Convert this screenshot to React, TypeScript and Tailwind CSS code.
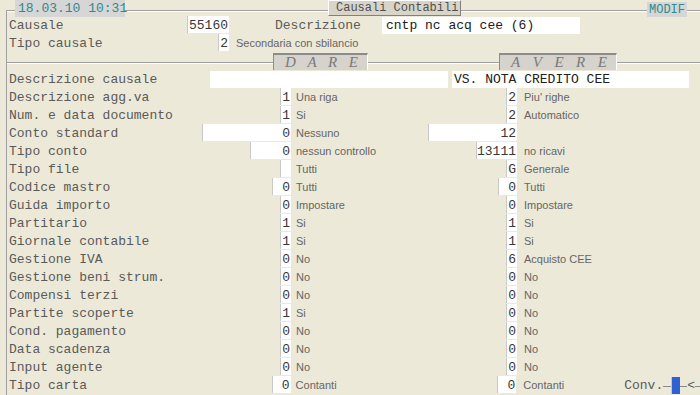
import React from "react";

const mono = { fontFamily: '"Liberation Mono", "Courier New", monospace' };
const sans = { fontFamily: '"Liberation Sans", Arial, sans-serif' };

function Line({ className = "" }: { className?: string }) {
  return <div className={"h-[2px] border-t border-t-[#a0a0a0] border-b border-b-white " + className} />;
}

function Box({ w, children }: { w: string; children?: React.ReactNode }) {
  return (
    <div className={w + " h-[17px] bg-white border-l border-l-[#c8c8c8] text-right pr-px leading-[19px] text-[13px] text-[#383838] whitespace-nowrap"}>
      {children}
    </div>
  );
}

type R = { label: string; d: string; dd: string; a: string; ad: string; dw: string; aw: string };

const S = "w-[11px]";
const rows: R[] = [
  { label: "Descrizione agg.va", d: "1", dd: "Una riga", a: "2", ad: "Piu' righe", dw: S, aw: S },
  { label: "Num. e data documento", d: "1", dd: "Si", a: "2", ad: "Automatico", dw: S, aw: S },
  { label: "Conto standard", d: "0", dd: "Nessuno", a: "12", ad: "", dw: "w-[89px]", aw: "w-[89px]" },
  { label: "Tipo conto", d: "0", dd: "nessun controllo", a: "13111", ad: "no ricavi", dw: "w-[41px]", aw: "w-[41px]" },
  { label: "Tipo file", d: "", dd: "Tutti", a: "G", ad: "Generale", dw: S, aw: S },
  { label: "Codice mastro", d: "0", dd: "Tutti", a: "0", ad: "Tutti", dw: "w-[19px]", aw: "w-[19px]" },
  { label: "Guida importo", d: "0", dd: "Impostare", a: "0", ad: "Impostare", dw: S, aw: S },
  { label: "Partitario", d: "1", dd: "Si", a: "1", ad: "Si", dw: S, aw: S },
  { label: "Giornale contabile", d: "1", dd: "Si", a: "1", ad: "Si", dw: S, aw: S },
  { label: "Gestione IVA", d: "0", dd: "No", a: "6", ad: "Acquisto CEE", dw: S, aw: S },
  { label: "Gestione beni strum.", d: "0", dd: "No", a: "0", ad: "No", dw: S, aw: S },
  { label: "Compensi terzi", d: "0", dd: "No", a: "0", ad: "No", dw: S, aw: S },
  { label: "Partite scoperte", d: "1", dd: "Si", a: "0", ad: "No", dw: S, aw: S },
  { label: "Cond. pagamento", d: "0", dd: "No", a: "0", ad: "No", dw: S, aw: S },
  { label: "Data scadenza", d: "0", dd: "No", a: "0", ad: "No", dw: S, aw: S },
  { label: "Input agente", d: "0", dd: "No", a: "0", ad: "No", dw: S, aw: S },
  { label: "Tipo carta", d: "0", dd: "Contanti", a: "0", ad: "Contanti", dw: "w-[19px]", aw: "w-[19px]" },
];

const LBL = "leading-[20px] text-[13px] text-[#5a5a5a] whitespace-nowrap";
const DSC = "leading-[19px] text-[11px] text-[#666666] whitespace-nowrap";

function Row({ r, last }: { r: R; last?: boolean }) {
  return (
    <div className="flex h-[18px] items-start pl-[2px]">
      <div className="w-[282px] flex justify-between items-start">
        <span className={LBL}>{r.label}</span>
        <Box w={r.dw}>{r.d}</Box>
      </div>
      <div className={"w-[135px] pl-[5px] " + DSC} style={sans}>{r.dd}</div>
      <div className="w-[91px] flex justify-end">
        <Box w={r.aw}>{r.a}</Box>
      </div>
      <div className={"pl-[7px] w-[108px] " + DSC} style={sans}>{r.ad}</div>
      {last && (
        <div className="flex items-start">
          <span className={LBL}>Conv.</span>
          <div className="w-[8px] h-px bg-[#8a8a8a] mt-[10px]" />
          <div className="w-[9px] h-[17px] bg-[#2f62d0] border-l border-l-[#c8c8c8] mt-px" />
          <div className="w-[7px] h-px bg-[#8a8a8a] mt-[10px]" />
          <span className={LBL}>&lt;</span>
          <div className="w-[5px] h-px bg-[#8a8a8a] mt-[10px]" />
        </div>
      )}
    </div>
  );
}

function Spaced({ letters, w }: { letters: string[]; w: string }) {
  return (
    <div className={w + " h-[17px] mt-px bg-[#d6d3cc] border-t-2 border-t-[#8c8c8c] border-l border-l-[#8c8c8c] border-r border-r-white flex justify-between pl-[11px] pr-[9px] items-center italic text-[15px] text-[#7a7a7a]"}>
      {letters.map((l, i) => (
        <span key={i} className="leading-[15px]" style={{ fontFamily: '"Liberation Serif", "Times New Roman", serif' }}>{l}</span>
      ))}
    </div>
  );
}

export default function App() {
  return (
    <div className="w-[700px] h-[395px] bg-[#ece9d8] overflow-hidden" style={mono}>
      {/* top bar */}
      <div className="flex items-start h-[16px]">
        <div className="w-[6px]" />
        <Line className="w-[9px] mt-[10px]" />
        <div className="w-[110px] h-[17px] bg-[#d6d6d6] text-[#2e8b8b] text-[13px] leading-[18px] pl-[3px] relative z-10 whitespace-nowrap">18.03.10 10:31</div>
        <Line className="w-[203px] mt-[10px]" />
        <div className="w-[133px] h-[16px] bg-[#d8d4c8] border-t border-l border-white border-r border-b border-r-[#808080] border-b-[#808080] text-[#505050] text-[12px] leading-[15px] pl-[7px] whitespace-nowrap">Causali Contabili</div>
        <Line className="w-[186px] mt-[10px]" />
        <div className="w-[40px] h-[15px] mt-[2px] bg-[#d6d6d6] text-[#2e8b8b] text-[12px] leading-[16px] text-center whitespace-nowrap">MODIF</div>
        <Line className="flex-1 mt-[10px]" />
      </div>

      <div className="ml-[6px] border-l border-l-[#a0a0a0] h-[379px] relative">
        <div className="absolute left-[-1px] top-[-6px] w-px h-[6px] bg-[#a0a0a0]" />
        {/* Causale */}
        <div className="flex h-[18px] items-start pl-[2px]">
          <span className={"w-[178px] " + LBL}>Causale</span>
          <Box w="w-[42px]">55160</Box>
          <span className={"ml-[46px] w-[107px] " + LBL}>Descrizione</span>
          <div className="w-[198px] h-[17px] mt-px bg-white pl-[4px] leading-[18px] text-[13px] text-[#202020] whitespace-nowrap">cntp nc acq cee (6)</div>
        </div>
        {/* Tipo causale */}
        <div className="flex h-[18px] items-start pl-[2px]">
          <span className={"w-[209px] " + LBL}>Tipo causale</span>
          <Box w="w-[11px]">2</Box>
          <span className={"pl-[7px] " + DSC} style={sans}>Secondaria con sbilancio</span>
        </div>
        {/* header */}
        <div className="flex h-[18px] items-start">
          <Line className="w-[266px] mt-[10px]" />
          <Spaced letters={["D", "A", "R", "E"]} w="w-[95px]" />
          <Line className="w-[131px] mt-[10px]" />
          <Spaced letters={["A", "V", "E", "R", "E"]} w="w-[118px]" />
          <Line className="flex-1 mt-[10px]" />
        </div>
        {/* Descrizione causale */}
        <div className="flex h-[18px] items-start pl-[2px]">
          <span className={"w-[201px] " + LBL}>Descrizione causale</span>
          <div className="w-[238px] h-[17px] mt-px bg-white" />
          <div className="ml-[4px] w-[237px] h-[17px] mt-px bg-white pl-[2px] leading-[18px] text-[13px] text-[#202020] whitespace-nowrap">VS. NOTA CREDITO CEE</div>
        </div>
        {rows.map((r, i) => (
          <Row key={i} r={r} last={i === rows.length - 1} />
        ))}
      </div>
    </div>
  );
}
